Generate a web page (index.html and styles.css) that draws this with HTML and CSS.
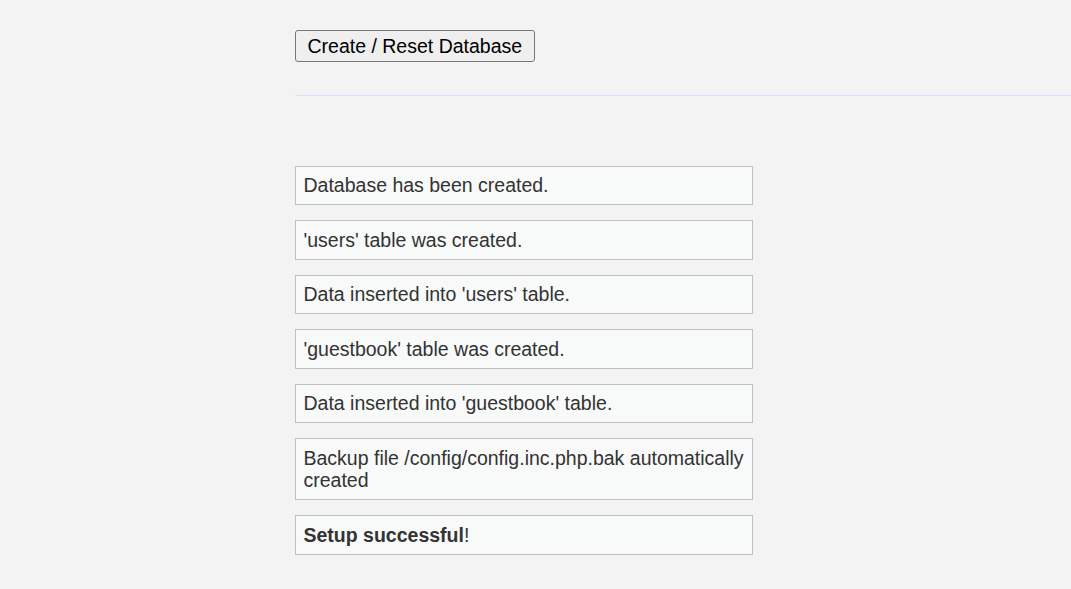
FILE: index.html
```html
<!DOCTYPE html>
<html>
<head>
<meta charset="utf-8">
<title>Setup</title>
<link rel="stylesheet" href="styles.css">
</head>
<body>
<div class="page">
  <form class="setup-form">
    <button type="button" class="btn">Create / Reset Database</button>
  </form>
  <hr class="rule">
  <div class="messages">
    <div class="message">Database has been created.</div>
    <div class="message">'users' table was created.</div>
    <div class="message">Data inserted into 'users' table.</div>
    <div class="message">'guestbook' table was created.</div>
    <div class="message">Data inserted into 'guestbook' table.</div>
    <div class="message">Backup file /config/config.inc.php.bak automatically created</div>
    <div class="message"><strong>Setup successful</strong>!</div>
  </div>
</div>
</body>
</html>
```

FILE: styles.css
```css
html, body {
  margin: 0;
  padding: 0;
  background: #f3f3f3;
}
body {
  font-family: "Liberation Sans", Arial, sans-serif;
  color: #333;
}
.page {
  padding: 30px 0 0 295px;
}
.setup-form {
  margin: 0;
}
.btn {
  font-family: "Liberation Sans", Arial, sans-serif;
  font-size: 19.5px;
  line-height: 23px;
  color: #000;
  background: #efefef;
  border: 1px solid #767676;
  border-radius: 3px;
  padding: 3px 11.5px;
  margin: 0;
  height: 32px;
  box-sizing: border-box;
}
.rule {
  border: 0;
  height: 1px;
  background: #d5e2f8;
  margin: 33px 0 0 0;
}
.messages {
  margin-top: 69.6px;
  display: flex;
  flex-direction: column;
  gap: 15px;
}
.message {
  width: 458px;
  box-sizing: border-box;
  background: #f8f9f9;
  border: 1px solid #c0c0c0;
  padding: 7.5px 7.5px;
  font-size: 19.5px;
  line-height: 22.5px;
}
.message strong {
  font-weight: bold;
}
```
